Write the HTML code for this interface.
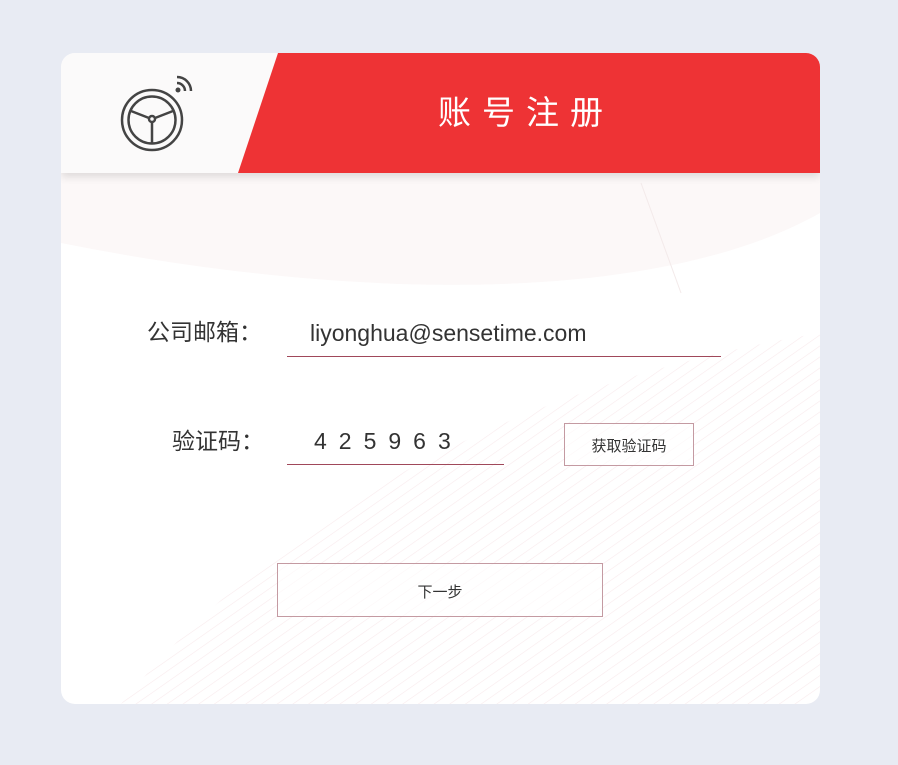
<!DOCTYPE html>
<html><head><meta charset="utf-8"><style>
*{margin:0;padding:0;box-sizing:border-box}
body{width:898px;height:765px;background:#e8ebf3;position:relative;overflow:hidden;font-family:"Liberation Sans","Noto Sans CJK SC",sans-serif}
.card{position:absolute;left:61px;top:53px;width:759px;height:651px;background:#fff;border-radius:14px;overflow:hidden}
.hdr{position:absolute;left:0;top:0;width:759px;height:120px;background:#fbfafa;box-shadow:0 4px 8px rgba(0,0,0,.12)}
.red{position:absolute;left:0;top:0;width:759px;height:120px;background:#ee3335;clip-path:polygon(217px 0,759px 0,759px 120px,177px 120px)}
.title{position:absolute;left:377px;top:40px;color:#fff;font-size:33px;letter-spacing:11px;line-height:40px}
.lbl{position:absolute;font-size:23px;color:#333;line-height:30px}
.val{position:absolute;font-size:23px;color:#333;line-height:30px}
.line{position:absolute;height:1px;background:#a0485a}
.btn{position:absolute;border:1px solid #c49aa2;background:rgba(255,255,255,.6);font-size:15px;color:#333;text-align:center}
</style></head><body>
<div class="card">
<svg style="position:absolute;left:0;top:0" width="759" height="651">
<defs><pattern id="st" width="9" height="9" patternUnits="userSpaceOnUse" patternTransform="rotate(-35)"><line x1="0" y1="0" x2="9" y2="0" stroke="#f8eaec" stroke-width="1.2"/></pattern></defs>
<path d="M60 651 C250 420 520 320 759 280 L759 651 Z" fill="url(#st)"/>
<path d="M0 120 L759 120 L759 160 C600 250 300 250 0 190 Z" fill="#fcf8f8"/>
<path d="M580 130 L620 240" stroke="#f3eaea" fill="none"/>
</svg>
<div class="hdr"></div>
<div class="red"></div>
<svg style="position:absolute;left:58px;top:20px" width="80" height="82" viewBox="0 0 80 82">
<g fill="none" stroke="#444" stroke-width="2.5">
<circle cx="33" cy="47" r="30"/><circle cx="33" cy="47" r="23.5"/>
<circle cx="33" cy="46" r="3"/>
<path d="M30 45 L12 38 M36 45 L54 38 M33 49 L33 70"/>
<path d="M58 10 A8 8 0 0 1 66 18"/><path d="M58 4 A14 14 0 0 1 72 18"/>
</g><circle cx="59" cy="17" r="2.5" fill="#444"/>
</svg>
<div class="title">账号注册</div>
<div class="lbl" style="left:86px;top:264px">公司邮箱：</div>
<div class="val" style="left:249px;top:265px">liyonghua@sensetime.com</div>
<div class="line" style="left:226px;top:303px;width:434px"></div>
<div class="lbl" style="left:111px;top:373px">验证码：</div>
<div class="val" style="left:253px;top:373px;letter-spacing:12px">425963</div>
<div class="line" style="left:226px;top:411px;width:217px"></div>
<div class="btn" style="left:503px;top:370px;width:130px;height:43px;line-height:45px">获取验证码</div>
<div class="btn" style="left:216px;top:510px;width:326px;height:54px;line-height:58px">下一步</div>
</div>
</body></html>
